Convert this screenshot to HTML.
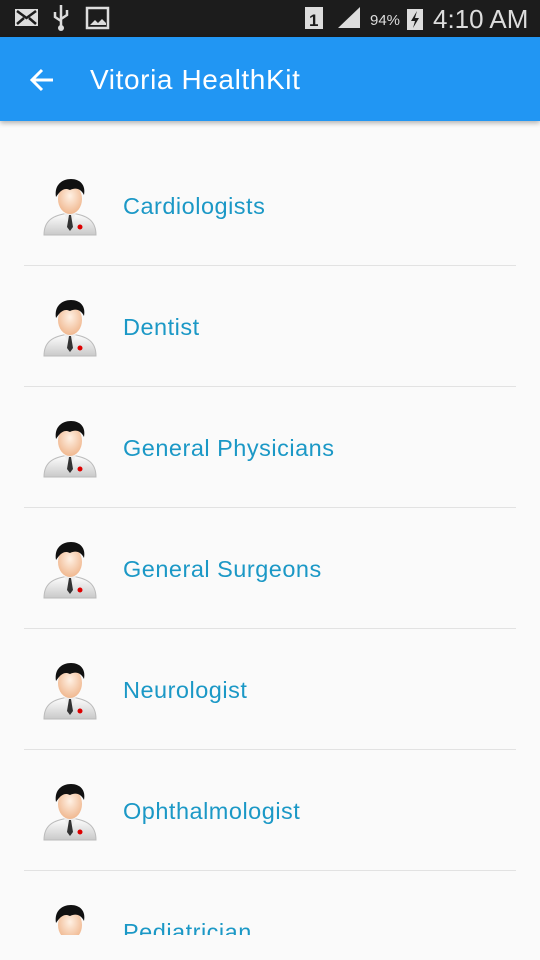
<!DOCTYPE html><html><head><style>
*{margin:0;padding:0;box-sizing:border-box}
body{width:540px;height:960px;background:#fafafa;font-family:"Liberation Sans",sans-serif;overflow:hidden;position:relative}
.sb{height:37px;background:#1c1c1c;color:#ddd;position:relative}
.ab{height:84px;background:#2196f3;position:relative;box-shadow:0 2px 5px rgba(0,0,0,.3);z-index:2}
.ab .t{position:absolute;left:90px;top:27px;color:#fff;font-size:28px;letter-spacing:.6px}
.list{position:absolute;top:145px;left:0;width:540px;height:790px;overflow:hidden}
.row{height:121px;position:relative}
.row:after{content:"";position:absolute;left:24px;right:24px;bottom:0;height:1px;background:#e2e2e2}
.row svg{position:absolute;left:40px;top:30px}
.row span{position:absolute;left:123px;top:48px;font-size:23.5px;letter-spacing:.5px;color:#1b98c6}
</style></head><body>
<div class="sb">
<svg width="540" height="37" style="position:absolute;left:0;top:0">
<rect x="15" y="9" width="23" height="17" fill="#ddd"/><path d="M17 11l9.5 7 9.5-7M17 24l7-6M36 24l-7-6" stroke="#1c1c1c" stroke-width="2.5" fill="none"/>
<path d="M61 5v24M55 12v5l6 4M67 10v5l-6 4" stroke="#ddd" stroke-width="2.5" fill="none"/><circle cx="61" cy="28" r="3" fill="#ddd"/>
<rect x="87" y="8" width="21" height="20" fill="none" stroke="#ddd" stroke-width="2.5"/><path d="M90 25l5-5 3 3 4-4 4 4v2z" fill="#ddd"/>
<rect x="305" y="7" width="18" height="22" fill="#ddd"/><text x="309" y="26" font-size="17" font-weight="bold" fill="#1c1c1c" font-family="Liberation Sans">1</text>
<path d="M338 28h22V7z" fill="#ddd"/>
<text x="370" y="25" font-size="15" fill="#ddd" font-family="Liberation Sans">94%</text>
<rect x="407" y="9" width="16" height="21" fill="#ddd"/><path d="M417 11l-6 10h4l-2 7 6-10h-4z" fill="#1c1c1c"/>
<text x="433" y="28" font-size="26" fill="#ddd" font-family="Liberation Sans">4:10 AM</text>
</svg></div>
<div class="ab"><svg width="30" height="30" style="position:absolute;left:27px;top:28px"><path d="M26 15H6M15 5L5 15l10 10" stroke="#fff" stroke-width="3" fill="none"/></svg><div class="t">Vitoria HealthKit</div></div>
<svg width="0" height="0" style="position:absolute"><defs>
<radialGradient id="sk" cx=".5" cy=".4" r=".6"><stop offset="0" stop-color="#fff1e4"/><stop offset="1" stop-color="#f0b890"/></radialGradient>
<linearGradient id="co" x1="0" y1="0" x2="0" y2="1"><stop offset="0" stop-color="#fff"/><stop offset="1" stop-color="#c9c9c9"/></linearGradient>
<g id="doc">
<path d="M4 60c0-14 8-20 26-22 18 2 26 8 26 22z" fill="url(#co)" stroke="#bbb"/>
<path d="M24 38l6 14 6-14z" fill="#eee"/><path d="M29 40h2l2 12-3 4-3-4z" fill="#333"/>
<circle cx="40" cy="52" r="2.5" fill="#d00"/>
<ellipse cx="30" cy="24" rx="12" ry="15" fill="url(#sk)"/>
<path d="M16 22c-2-12 6-18 15-18 9 0 15 6 13 16-3-6-8-8-14-5-6-3-10 1-14 7z" fill="#111"/>
</g></defs></svg>
<div class="list">
<div class="row"><svg width="60" height="62"><use href="#doc"/></svg><span>Cardiologists</span></div>
<div class="row"><svg width="60" height="62"><use href="#doc"/></svg><span>Dentist</span></div>
<div class="row"><svg width="60" height="62"><use href="#doc"/></svg><span>General Physicians</span></div>
<div class="row"><svg width="60" height="62"><use href="#doc"/></svg><span>General Surgeons</span></div>
<div class="row"><svg width="60" height="62"><use href="#doc"/></svg><span>Neurologist</span></div>
<div class="row"><svg width="60" height="62"><use href="#doc"/></svg><span>Ophthalmologist</span></div>
<div class="row"><svg width="60" height="62"><use href="#doc"/></svg><span>Pediatrician</span></div>
</div>
</body></html>
